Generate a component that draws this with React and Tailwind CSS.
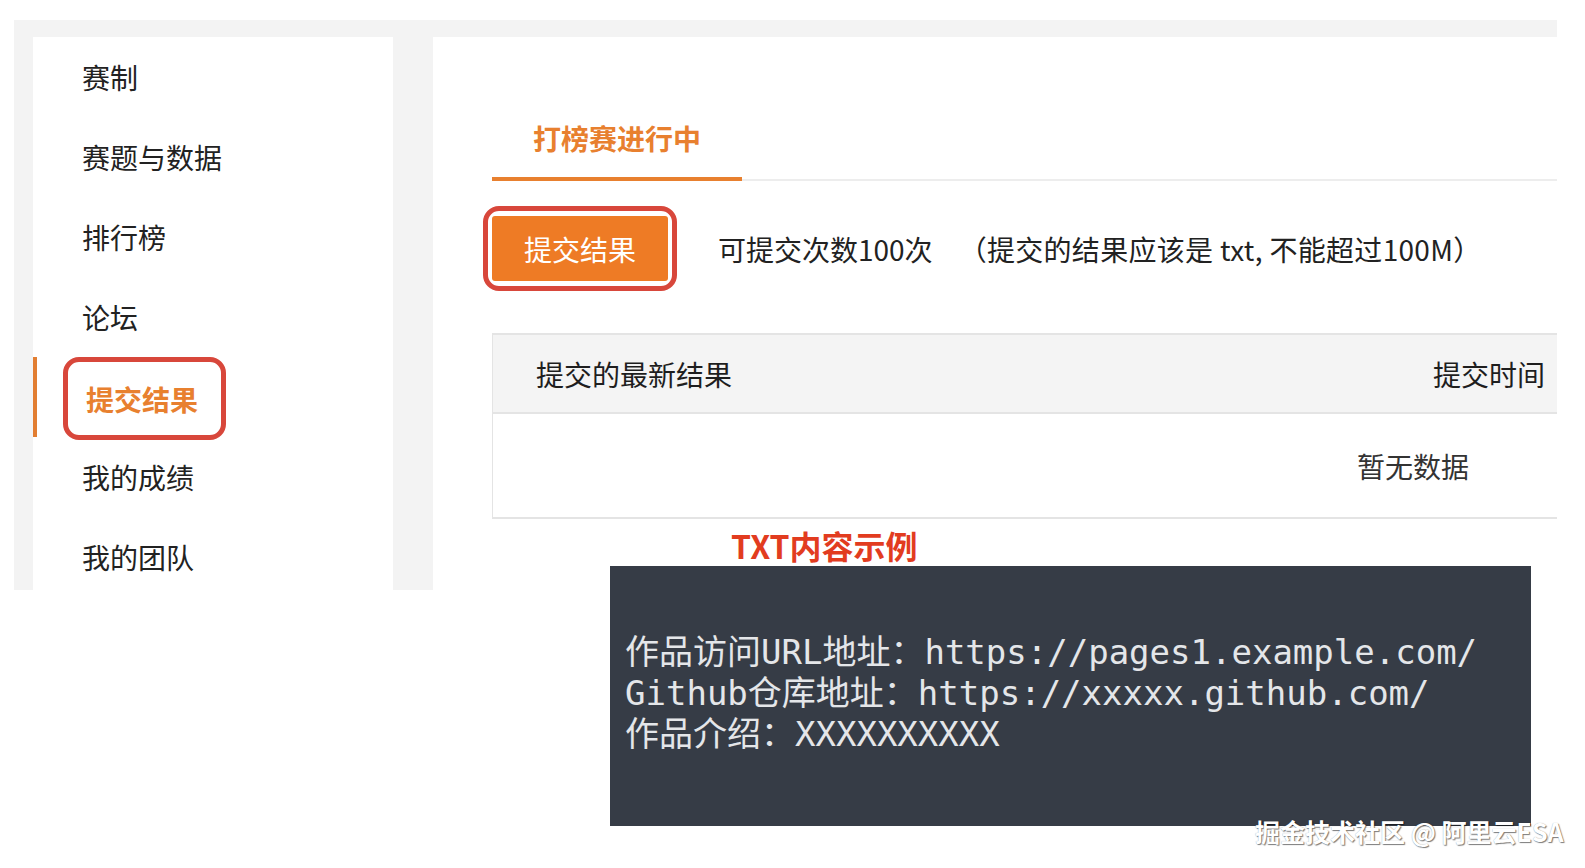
const navItems = ["赛制", "赛题与数据", "排行榜", "论坛", "提交结果", "我的成绩", "我的团队"];

const sans = { fontFamily: '"Noto Sans CJK SC", "Noto Sans", sans-serif' };

// 左侧菜单
const SideNav = ({ active }) => (
  <div className="w-[360px] h-full bg-white overflow-hidden shrink-0">
    {navItems.map((item) =>
      item === active ? (
        <div key={item} className="h-[80px] flex items-center border-l-[4px] border-[#e27e32]">
          <div className="ml-[26px] mt-[3px] h-[83px] w-[163px] flex items-center pl-[18px] border-[5px] border-[#d8473b] rounded-[16px]">
            <span className="text-[28px] font-bold text-[#e8802f] leading-none">{item}</span>
          </div>
        </div>
      ) : (
        <div key={item} className="h-[80px] flex items-center pl-[49px] text-[28px] text-[#222]">
          {item}
        </div>
      )
    )}
  </div>
);

const App = () => {
  return (
    <div className="relative min-h-screen bg-white pt-[20px] pl-[14px]" style={sans}>
      <div className="w-[1543px] h-[570px] bg-[#f3f3f3] pt-[17px] pl-[19px] flex gap-[40px]">
        <SideNav active="提交结果" />

        <div className="flex-1 h-full bg-white pl-[59px]">
          {/* tabs */}
          <div className="flex border-b-2 border-[#ededed]">
            <div className="-mb-[2px] pt-[81px] pb-[19px] px-[41px] border-b-[4px] border-[#e8802f] text-[28px] leading-[40px] font-bold text-[#e8802f]">
              打榜赛进行中
            </div>
          </div>

          {/* upload row */}
          <div className="flex items-center mt-[25px]">
            <div className="-ml-[9px] border-[5px] border-[#d8473b] rounded-[16px] px-[4px] py-[5px]">
              <button className="w-[176px] h-[65px] bg-[#ee7b25] rounded-[3px] text-white text-[28px]">
                提交结果
              </button>
            </div>
            <span className="ml-[41px] text-[28px] text-[#222]">可提交次数100次</span>
            <span className="ml-[26px] text-[28px] tracking-[0.3px] text-[#222]">（提交的结果应该是 txt, 不能超过100M）</span>
          </div>

          {/* results table */}
          <div className="mt-[42px] border-l border-y-2 border-[#e4e4e4]">
            <div className="h-[79px] bg-[#f4f4f4] border-b-2 border-[#e4e4e4] flex items-center justify-between pl-[43px] pr-[12px] text-[28px] text-[#1e1e1e]">
              <span>提交的最新结果</span>
              <span>提交时间</span>
            </div>
            <div className="h-[103px] flex items-center justify-end pr-[88px] text-[28px] text-[#333]">
              暂无数据
            </div>
          </div>

          {/* txt sample */}
          <div className="mt-[8px] ml-[239px] text-[32px] leading-[36px] font-bold text-[#e23c1f]">
            TXT内容示例
          </div>
          <div
            className="mt-[3px] ml-[118px] w-[921px] h-[260px] bg-[#363c46] pt-[66px] pl-[15px] text-[34px] leading-[41px] text-[#e4e6e9] whitespace-pre"
            style={{ fontFamily: '"DejaVu Sans Mono", "Noto Sans CJK SC", monospace' }}
          >
            <div>作品访问URL地址：https://pages1.example.com/</div>
            <div>Github仓库地址：https://xxxxx.github.com/</div>
            <div>作品介绍：XXXXXXXXXX</div>
          </div>
        </div>
      </div>

      <div className="absolute left-[1255px] top-[815px] text-[25px] leading-[32px] font-bold text-white [text-shadow:1px_1px_1px_rgba(0,0,0,0.5),0_0_1px_rgba(0,0,0,0.35)]">
        掘金技术社区 @ 阿里云ESA
      </div>
    </div>
  );
};

export default App;
